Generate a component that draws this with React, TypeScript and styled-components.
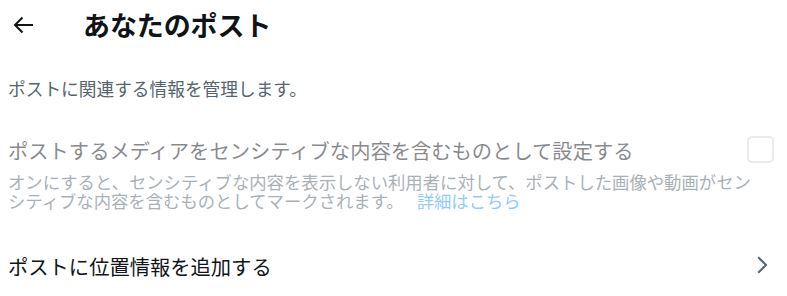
import React from "react";
import styled, { createGlobalStyle } from "styled-components";

const Global = createGlobalStyle`
  html, body { margin: 0; padding: 0; background: #ffffff; }
  body { font-family: "Noto Sans CJK JP", "Noto Sans", sans-serif; color: #0f1419; }
`;

const Page = styled.div`
  width: 787px;
  display: flex;
  flex-direction: column;
`;

const Header = styled.header`
  height: 50px;
  display: flex;
  align-items: center;
`;

const BackButton = styled.button`
  width: 83px;
  height: 50px;
  border: 0;
  background: transparent;
  padding: 0 0 0 13px;
  display: flex;
  align-items: center;
  color: #0f1419;
  cursor: pointer;
`;

const Title = styled.h1`
  margin: 0;
  font-size: 27px;
  line-height: 50px;
  font-weight: 700;
  letter-spacing: -0.1px;
`;

const Description = styled.p`
  margin: 26px 0 0;
  padding: 0 8px;
  font-size: 17.7px;
  line-height: 24px;
  color: #536471;
`;

const Setting = styled.div<{ $disabled?: boolean }>`
  display: flex;
  flex-direction: column;
  padding: 0 24px 0 8px;
  opacity: ${(p) => (p.$disabled ? 0.5 : 1)};
`;

const LabelRow = styled.div<{ $top: number }>`
  margin-top: ${(p) => p.$top}px;
  display: flex;
  align-items: center;
  justify-content: space-between;
`;

const Label = styled.span`
  font-size: 20.3px;
  line-height: 26px;
  color: #0f1419;
`;

const CheckBox = styled.span`
  width: 27px;
  height: 27px;
  box-sizing: border-box;
  border: 2px solid #cfd9de;
  border-radius: 5px;
  margin-right: -11px;
`;

const Help = styled.p`
  margin: 9px 0 0;
  font-size: 17.35px;
  line-height: 19px;
  color: #536471;
`;

const Link = styled.a`
  color: #1d9bf0;
  text-decoration: none;
  margin-left: 13px;
`;

const Chevron = styled.svg`
  width: 24px;
  height: 24px;
  margin-right: -11px;
  margin-top: -2px;
  fill: #536471;
`;

export default function App() {
  return (
    <Page>
      <Global />
      <Header>
        <BackButton aria-label="戻る">
          <svg width="21" height="18" viewBox="0 0 21 18" fill="none" stroke="#0f1419" strokeWidth="2">
            <path d="M20 9H2.5" />
            <path d="M9.5 1.5L2 9l7.5 7.5" />
          </svg>
        </BackButton>
        <Title>あなたのポスト</Title>
      </Header>
      <Description>ポストに関連する情報を管理します。</Description>
      <Setting $disabled>
        <LabelRow $top={36}>
          <Label>ポストするメディアをセンシティブな内容を含むものとして設定する</Label>
          <CheckBox />
        </LabelRow>
        <Help>
          オンにすると、センシティブな内容を表示しない利用者に対して、ポストした画像や動画がセンシティブな内容を含むものとしてマークされます。
          <Link href="#">詳細はこちら</Link>
        </Help>
      </Setting>
      <Setting>
        <LabelRow $top={43}>
          <Label>ポストに位置情報を追加する</Label>
          <Chevron viewBox="0 0 24 24">
            <path d="M14.586 12L7.543 4.96l1.414-1.42L17.414 12l-8.457 8.46-1.414-1.42L14.586 12z" />
          </Chevron>
        </LabelRow>
      </Setting>
    </Page>
  );
}
